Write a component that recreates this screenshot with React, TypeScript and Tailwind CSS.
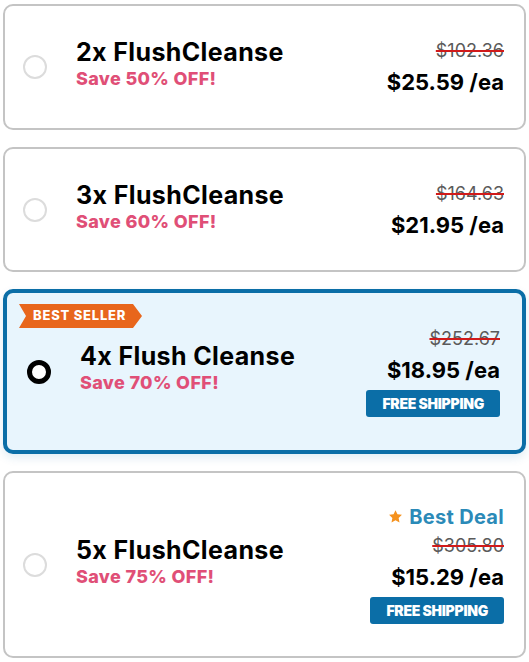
const font = { fontFamily: "Inter, 'Noto Sans', sans-serif" };

type Option = {
  title: string;
  save: string;
  was: string;
  price: string;
  selected?: boolean;
  bestSeller?: boolean;
  bestDeal?: boolean;
  freeShipping?: boolean;
  height: string;
};

const options: Option[] = [
  { title: "2x FlushCleanse", save: "Save 50% OFF!", was: "$102.36", price: "$25.59", height: "h-[126px]" },
  { title: "3x FlushCleanse", save: "Save 60% OFF!", was: "$164.63", price: "$21.95", height: "h-[125px]" },
  { title: "4x Flush Cleanse", save: "Save 70% OFF!", was: "$252.67", price: "$18.95", selected: true, bestSeller: true, freeShipping: true, height: "h-[165px]" },
  { title: "5x FlushCleanse", save: "Save 75% OFF!", was: "$305.80", price: "$15.29", bestDeal: true, freeShipping: true, height: "h-[187px]" },
];

function Card({ o }: { o: Option }) {
  return (
    <div
      className={`relative flex items-center rounded-[10px] ${o.height} ${
        o.selected
          ? "border-4 border-[#0b6ea7] bg-[#e8f5fd] pl-[20px] pr-[22px] shadow-[0_4px_10px_rgba(11,110,167,0.12)]"
          : "border-2 border-[#c4c4c4] bg-white pl-[18px] pr-[20px]"
      }`}
    >
      {o.bestSeller && (
        <div className="absolute left-[12px] top-[11px] flex h-[24px] w-[123px] items-center bg-[#e8661c] pl-[14px] [clip-path:polygon(0_0,calc(100%-9px)_0,100%_50%,calc(100%-9px)_100%,0_100%,7px_50%)]">
          <span className="text-[13px] font-extrabold tracking-[0.06em] text-white">BEST SELLER</span>
        </div>
      )}
      {o.selected ? (
        <div className="h-[24px] w-[24px] shrink-0 rounded-full border-[5px] border-black bg-white" />
      ) : (
        <div className="h-[24px] w-[24px] shrink-0 rounded-full border-2 border-[#dcdcdc] bg-white" />
      )}
      <div className={`ml-[29px] flex flex-col ${o.selected ? "mt-[-7px]" : "mt-[-6px]"}`}>
        <span className="text-[25px] font-bold leading-[29px] tracking-[0.015em] text-black">{o.title}</span>
        <span className="mt-[1px] text-[18px] font-extrabold leading-[22px] tracking-[0.02em] text-[#e04f77]">{o.save}</span>
      </div>
      <div className="ml-auto flex flex-col items-end">
        {o.bestDeal && (
          <div className="mb-[4px] flex items-center gap-[6px]">
            <svg width="15" height="15" viewBox="0 0 24 24" className="mt-[-2px]">
              <path
                fill="#f5921e"
                d="M12 1.8l3.1 6.6 7.2.9-5.3 5 1.4 7.1L12 17.9l-6.4 3.5 1.4-7.1-5.3-5 7.2-.9z"
              />
            </svg>
            <span className="text-[20px] font-bold leading-[24px] tracking-[0.015em] text-[#2b8ab8]">Best Deal</span>
          </div>
        )}
        <span className="text-[18px] leading-[26px] text-[#5a5a5a] line-through decoration-[#d11a1a] decoration-2">
          {o.was}
        </span>
        <span className="mt-[4px] text-[22px] font-bold leading-[28px] text-black">
          {o.price} <span className="font-bold">/ea</span>
        </span>
        {o.freeShipping && (
          <div className="mt-[6px] flex h-[27px] items-center rounded-[3px] bg-[#0b6ea7] px-[16px]">
            <span className="text-[14px] font-black tracking-[-0.02em] text-white">FREE SHIPPING</span>
          </div>
        )}
      </div>
    </div>
  );
}

export default function App() {
  return (
    <div className="min-h-[662px] w-[529px] bg-white pl-[3px] pr-[3px] pt-[4px]" style={font}>
      <div className="flex flex-col gap-[17px]">
        {options.map((o, i) => (
          <Card key={i} o={o} />
        ))}
      </div>
    </div>
  );
}
